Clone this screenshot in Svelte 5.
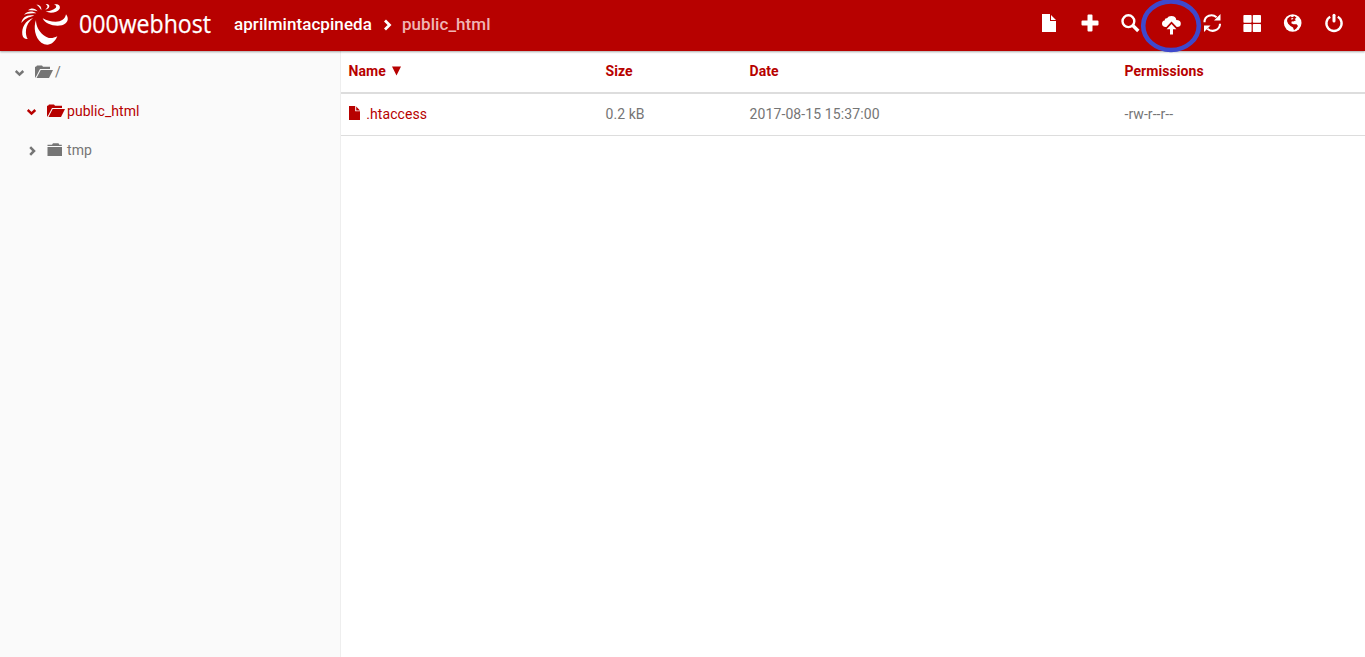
<script>
  const columns = ['Name', 'Size', 'Date', 'Permissions'];
  const tools = ['file', 'plus', 'search', 'upload', 'refresh', 'grid', 'globe', 'power'];
  const tree = [
    { name: '/', open: true, level: 0 },
    { name: 'public_html', open: true, level: 1, active: true },
    { name: 'tmp', open: false, level: 1 }
  ];
</script>

<div class="page">
  <header>
    <svg class="logo" viewBox="0 0 180 150" fill="#fff">
      <path d="M66 60C58 82 62 112 82 128C100 140 119 134 130 109C114 117 101 116 88 105C74 93 66 78 66 60Z" />
      <path d="M86 55C94 73 120 80 144 76C160 71 167 58 156 43C153 58 142 65 125 65C110 65 98 62 86 55Z" />
      <path d="M95 34C109 42 130 37 137 26C140 17 134 11 120 13C132 18 126 26 116 29C109 33 102 34 95 34Z" />
      <path d="M95 12C106 12 109 18 103 25Q99 29 94 28C102 23 103 18 95 12Z" />
      <path d="M67 14C77 13 83 20 82 31C78 24 74 18 67 14Z" />
      <path d="M42 31C51 22 64 24 71 34C62 31 53 30 42 31Z" />
      <path d="M30 44C41 32 57 33 67 40C53 40 43 40 30 44Z" />
      <path d="M22 69C25 52 39 43 61 47C42 51 31 57 22 69Z" />
      <path d="M57 54C34 62 22 83 25 104Q28 118 41 117C33 104 31 75 57 54Z" />
    </svg>
    <svg class="brand" viewBox="0 0 136 44">
      <text x="1" y="33.4" textLength="132" lengthAdjust="spacingAndGlyphs">000webhost</text>
    </svg>
    <nav>
      <span>aprilmintacpineda</span>
      <svg class="sep" viewBox="0 0 10 12"><path d="M2 1.5L6.5 6L2 10.5" fill="none" stroke="#fff" stroke-width="2.8" /></svg>
      <span class="current">public_html</span>
    </nav>
    <div class="tools">
      {#each tools as tool}
        <div class="tool">
          <svg viewBox="0 0 18 18" fill="#fff">
            {#if tool === 'file'}
              <path d="M2 0H10V7H16V18H2ZM11 1L16 6H11Z" />
            {:else if tool === 'plus'}
              <path d="M6.5 1.5Q6.5.5 7.5.5H10.5Q11.5.5 11.5 1.5V6.5H16.5Q17.5 6.5 17.5 7.5V10.5Q17.5 11.5 16.5 11.5H11.5V16.5Q11.5 17.5 10.5 17.5H7.5Q6.5 17.5 6.5 16.5V11.5H1.5Q.5 11.5.5 10.5V7.5Q.5 6.5 1.5 6.5H6.5Z" />
            {:else if tool === 'search'}
              <circle cx="7.4" cy="7.2" r="5.9" fill="none" stroke="#fff" stroke-width="2.4" />
              <path d="M11.8 11.5L17.3 17" stroke="#fff" stroke-width="3.4" />
            {:else if tool === 'upload'}
              <path d="M3.7 13Q0 13 0 9.6Q0 6.9 2.6 6.5Q2.6 4 5 4.3Q6.3 2 9.3 2Q14 2 14.3 6.1Q18.8 6.2 18.8 9.7Q18.8 13 14.8 13L9.5 7.4L4.4 13Z" />
              <path d="M9.5 8.4L16 14.9H3Z" fill="#b70100" />
              <path d="M9.5 10L14.4 15.2H11V20.4H8V15.2H4.6Z" />
            {:else if tool === 'refresh'}
              <path d="M1.5 8.2C1.5 1.5 9-.8 13.6 3.3M17 9.8C17 16.5 9 18.8 4.4 14.7" fill="none" stroke="#fff" stroke-width="2.1" />
              <path d="M17.5 0V6.5H11ZM1 18V11.5H7.5Z" />
            {:else if tool === 'grid'}
              <rect x="0.4" y="1" width="8.2" height="7.8" rx=".8" /><rect x="9.8" y="1" width="8.2" height="7.8" rx=".8" />
              <rect x="0.4" y="10" width="8.2" height="8" rx=".8" /><rect x="9.8" y="10" width="8.2" height="8" rx=".8" />
            {:else if tool === 'globe'}
              <circle cx="8.7" cy="9" r="8.8" />
              <path d="M3.5 4.5L6.3 2.2L8.3 3.2L10.5 2L12.5 3.8L10.6 4.9L12 6.2L9.3 7.6L7.8 7.3L7.3 9.2L9.4 10.3H12.6L14 12L12.3 14.5L10 16.3L9 13.6L6.5 12L4.2 9.8L3 7Z" fill="#b70100" />
              <path d="M7.4 3.8L9.6 4.5L7.6 6Z" />
            {:else}
              <path d="M5.2 2.8A7.6 7.6 0 1 0 12.8 2.8" fill="none" stroke="#fff" stroke-width="2.4" />
              <path d="M9 1.3V7" stroke="#fff" stroke-width="3" stroke-linecap="round" />
            {/if}
          </svg>
          {#if tool === 'upload'}
            <svg class="ring" viewBox="0 0 60 54"><ellipse cx="30" cy="25.7" rx="27.8" ry="24.3" fill="none" stroke="#3e48cc" stroke-width="4.6" /></svg>
          {/if}
        </div>
      {/each}
    </div>
  </header>

  <div class="body">
    <aside>
      {#each tree as node}
        <div class="node" class:child={node.level === 1} class:active={node.active}>
          <svg class="chev" viewBox="0 0 10 10"><path d={node.open ? 'M.7 3L4.5 6.6L8.3 3' : 'M3.2 1.2L7 5L3.2 8.8'} fill="none" stroke="currentColor" stroke-width="2.5" /></svg>
          <svg class="folder" viewBox="0 0 18 14" fill="currentColor">
            {#if node.open}
              <path d="M0 13V1.8H1L2 .5H7L8 1.8H15V4H5L1.7 10.5ZM5.7 5H18L14 13H1.5Z" />
            {:else}
              <path d="M.5 1.7H5L6 .3H11.5L12.3 1.7H14.8V3H.5ZM.5 4H15V13H.5Z" />
            {/if}
          </svg>
          <span>{node.name}</span>
        </div>
      {/each}
    </aside>
    <main>
      <div class="row head">
        {#each columns as column, i}
          <span>{column}{#if i === 0}<svg class="sort" viewBox="0 0 9 9"><path d="M0 0H9L4.5 9Z" fill="currentColor" /></svg>{/if}</span>
        {/each}
      </div>
      <div class="row">
        <span class="name"><svg class="doc" viewBox="0 0 11 14" fill="currentColor"><path d="M0 0H6.2V5.2H11V14H0ZM7.2.5L11 4.4H7.2Z" /></svg>.htaccess</span>
        <span>0.2 kB</span>
        <span class="date">2017-08-15 15:37:00</span>
        <span>-rw-r--r--</span>
      </div>
    </main>
  </div>
</div>

<style>
  :global(body) { margin: 0; overflow: hidden; }
  .page { height: 657px; display: flex; flex-direction: column; font-family: Roboto, sans-serif; font-size: 14px; letter-spacing: .06px; color: #757575; background: #fff; }
  svg { display: block; flex: none; }
  header { height: 51px; flex: none; display: flex; background: #b70100; box-shadow: 0 1px 2px rgba(0, 0, 0, .35); position: relative; z-index: 1; color: #fff; }
  .logo { width: 60px; height: 50px; margin-left: 14px; }
  .brand { width: 136px; height: 44px; margin-left: 4px; overflow: visible; }
  .brand text { font: 25px "Open Sans", sans-serif; letter-spacing: 0; fill: #fff; stroke: #fff; stroke-width: .25px; }
  nav { display: flex; align-items: center; height: 48px; margin-left: 20px; font-size: 17px; font-weight: 500; }
  .sep { width: 10px; height: 12px; margin: 2px 9px 0 11px; }
  .current { color: #efb5b5; }
  .tools { display: flex; margin-left: auto; margin-right: 11px; }
  .tool { width: 40.7px; height: 46px; display: flex; align-items: center; justify-content: center; position: relative; }
  .tool svg { width: 18px; height: 18px; overflow: visible; }
  .tool .ring { position: absolute; width: 60px; height: 54px; left: -9.7px; top: 0; overflow: visible; }
  .body { flex: 1; display: flex; }
  aside { width: 340px; background: #fafafa; border-right: 1px solid #eee; padding-top: 1px; }
  .node { height: 39px; display: flex; align-items: center; padding-left: 14.5px; }
  .child { padding-left: 26.5px; }
  .chev { width: 10px; height: 10px; margin: 3px 10.5px 0 0; }
  .folder { width: 18px; height: 14px; margin-right: 2px; }
  .active { color: #b70100; }
  main { flex: 1; }
  .row { display: grid; box-sizing: border-box; grid-template-columns: 257px 144px 375px 1fr; height: 42px; align-items: center; padding: 0 0 1px 7.5px; border-bottom: 1px solid #ddd; }
  .row span { display: flex; align-items: center; }
  .head { height: 43px; padding-bottom: 2px; border-bottom-width: 2px; color: #b70100; font-weight: 700; }
  .name { color: #b70100; }
  .date { letter-spacing: .11px; }
  .sort { width: 9px; height: 10px; margin-left: 6px; }
  .doc { width: 11px; height: 14px; margin: -2px 6px 0 .8px; }
</style>
